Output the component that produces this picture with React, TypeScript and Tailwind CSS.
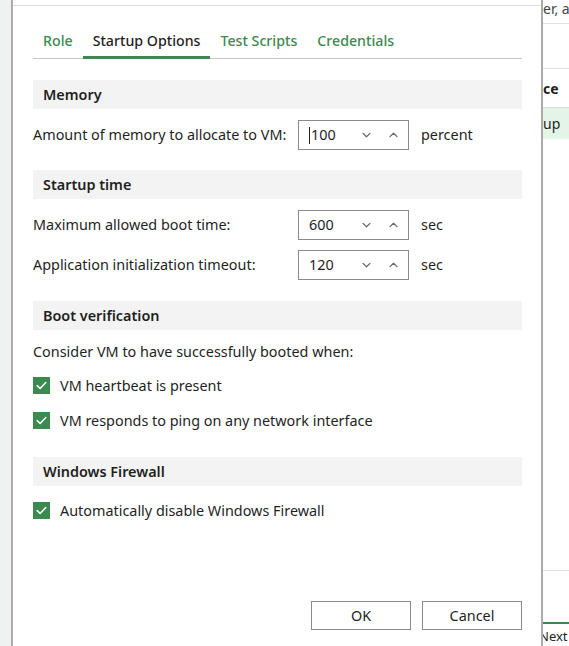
import { useState } from "react";

const FONT = { fontFamily: '"Noto Sans", "Open Sans", sans-serif' };

function Chevron({ up }: { up?: boolean }) {
  return (
    <svg width="9" height="6" viewBox="0 0 9 6" fill="none">
      <path
        d={up ? "M1 4.6l3.5-3.4 3.5 3.4" : "M1 1.4l3.5 3.4 3.5-3.4"}
        stroke="#666"
        strokeWidth="1.2"
        strokeLinecap="round"
        strokeLinejoin="round"
      />
    </svg>
  );
}

function Spin({ value, focused }: { value: string; focused?: boolean }) {
  return (
    <div className="flex h-[30px] w-[111px] items-center border border-[#8a8a8a] bg-white pl-[10px] pr-[10px]">
      {focused && <span className="mr-[1px] h-[17px] w-px bg-[#1f1f1f]" />}
      <span className="flex-1 text-[14.4px] text-[#1f1f1f]">{value}</span>
      <div className="flex items-center gap-[18px]">
        <Chevron />
        <Chevron up />
      </div>
    </div>
  );
}

function Header({ title }: { title: string }) {
  return (
    <div className="flex h-[29px] items-center bg-[#f3f3f3] pl-[10px] text-[14.4px] font-semibold text-[#1f1f1f]">
      {title}
    </div>
  );
}

function Check({ label }: { label: string }) {
  const [on, setOn] = useState(true);
  return (
    <button onClick={() => setOn((o) => !o)} className="flex h-[17px] items-center gap-[10px] text-left">
      <span className={`flex h-[17px] w-[17px] items-center justify-center ${on ? "bg-[#3b8a4f]" : "border border-[#8a8a8a] bg-white"}`}>
        {on && (
          <svg width="11" height="9" viewBox="0 0 11 9" fill="none">
            <path d="M1.2 4.6l2.9 2.9L9.8 1.5" stroke="white" strokeWidth="1.5" strokeLinecap="round" strokeLinejoin="round" />
          </svg>
        )}
      </span>
      <span className="text-[14.4px] text-[#1f1f1f]">{label}</span>
    </button>
  );
}

function Row({ label, value, unit, focused }: { label: string; value: string; unit: string; focused?: boolean }) {
  return (
    <div className="flex h-[30px] items-center">
      <span className="w-[265px] text-[14.4px] text-[#1f1f1f]">{label}</span>
      <Spin value={value} focused={focused} />
      <span className="ml-[12px] text-[14.4px] text-[#1f1f1f]">{unit}</span>
    </div>
  );
}

export default function App() {
  const tabs = ["Role", "Startup Options", "Test Scripts", "Credentials"];
  const [tab, setTab] = useState(1);

  return (
    <div className="flex h-[646px] w-[569px] overflow-hidden bg-white" style={FONT}>
      <div className="w-[11px] shrink-0 bg-[#f0f2f1]" />
      <div className="flex w-[532px] shrink-0 flex-col border-x-2 border-x-[#ababab] bg-white">
        <div className="h-[6px] border-b border-[#dcdcdc]" />
        <div className="flex flex-1 flex-col pl-[20px] pr-[19px]">
          <div className="mt-[24px] flex border-b border-[#c8c8c8]">
            {tabs.map((t, i) => (
              <button
                key={t}
                onClick={() => setTab(i)}
                className={`-mb-px px-[10px] pb-[5px] text-[14.2px] font-medium ${
                  i === tab
                    ? "border-b-[3px] border-[#3b8a4f] text-[#1f1f1f]"
                    : "border-b-[3px] border-transparent text-[#3b8a4f]"
                }`}
              >
                {t}
              </button>
            ))}
          </div>

          <div className="mt-[21px] flex flex-col">
            <Header title="Memory" />
            <div className="mt-[11px]">
              <Row label="Amount of memory to allocate to VM:" value="100" unit="percent" focused />
            </div>

            <div className="mt-[20px]">
              <Header title="Startup time" />
            </div>
            <div className="mt-[11px] flex flex-col gap-[10px]">
              <Row label="Maximum allowed boot time:" value="600" unit="sec" />
              <Row label="Application initialization timeout:" value="120" unit="sec" />
            </div>

            <div className="mt-[21px]">
              <Header title="Boot verification" />
            </div>
            <p className="mt-[12px] text-[14.4px] leading-[20px] text-[#1f1f1f]">Consider VM to have successfully booted when:</p>
            <div className="mt-[15px] flex flex-col gap-[18px]">
              <Check label="VM heartbeat is present" />
              <Check label="VM responds to ping on any network interface" />
            </div>

            <div className="mt-[28px]">
              <Header title="Windows Firewall" />
            </div>
            <div className="mt-[16px]">
              <Check label="Automatically disable Windows Firewall" />
            </div>
          </div>

          <div className="mt-auto mb-[16px] flex justify-end gap-[11px]">
            <button className="h-[29px] w-[100px] border border-[#8a8a8a] bg-white text-[14.4px] text-[#1f1f1f]">OK</button>
            <button className="h-[29px] w-[100px] border border-[#8a8a8a] bg-white text-[14.4px] text-[#1f1f1f]">Cancel</button>
          </div>
        </div>
      </div>

      <div className="flex w-[26px] shrink-0 flex-col overflow-hidden whitespace-nowrap text-[14px] text-[#1f1f1f]">
        <div className="h-[24px] border-b border-[#e0e0e0] leading-[18px] text-[#444]">er, a</div>
        <div className="h-[46px] border-b border-[#e0e0e0]" />
        <div className="flex h-[39px] items-center border-b border-[#dcdcdc] font-bold">ce</div>
        <div className="flex h-[31px] items-center bg-[#e4f5e8]">up</div>
        <div className="h-[436px] border-b border-[#e0e0e0]" />
        <div className="h-[51px]" />
        <div className="flex-1 border-t-2 border-[#3b8a4f] pt-px">
          <span className="-ml-[4px] text-[13px]">Next</span>
        </div>
      </div>
    </div>
  );
}
